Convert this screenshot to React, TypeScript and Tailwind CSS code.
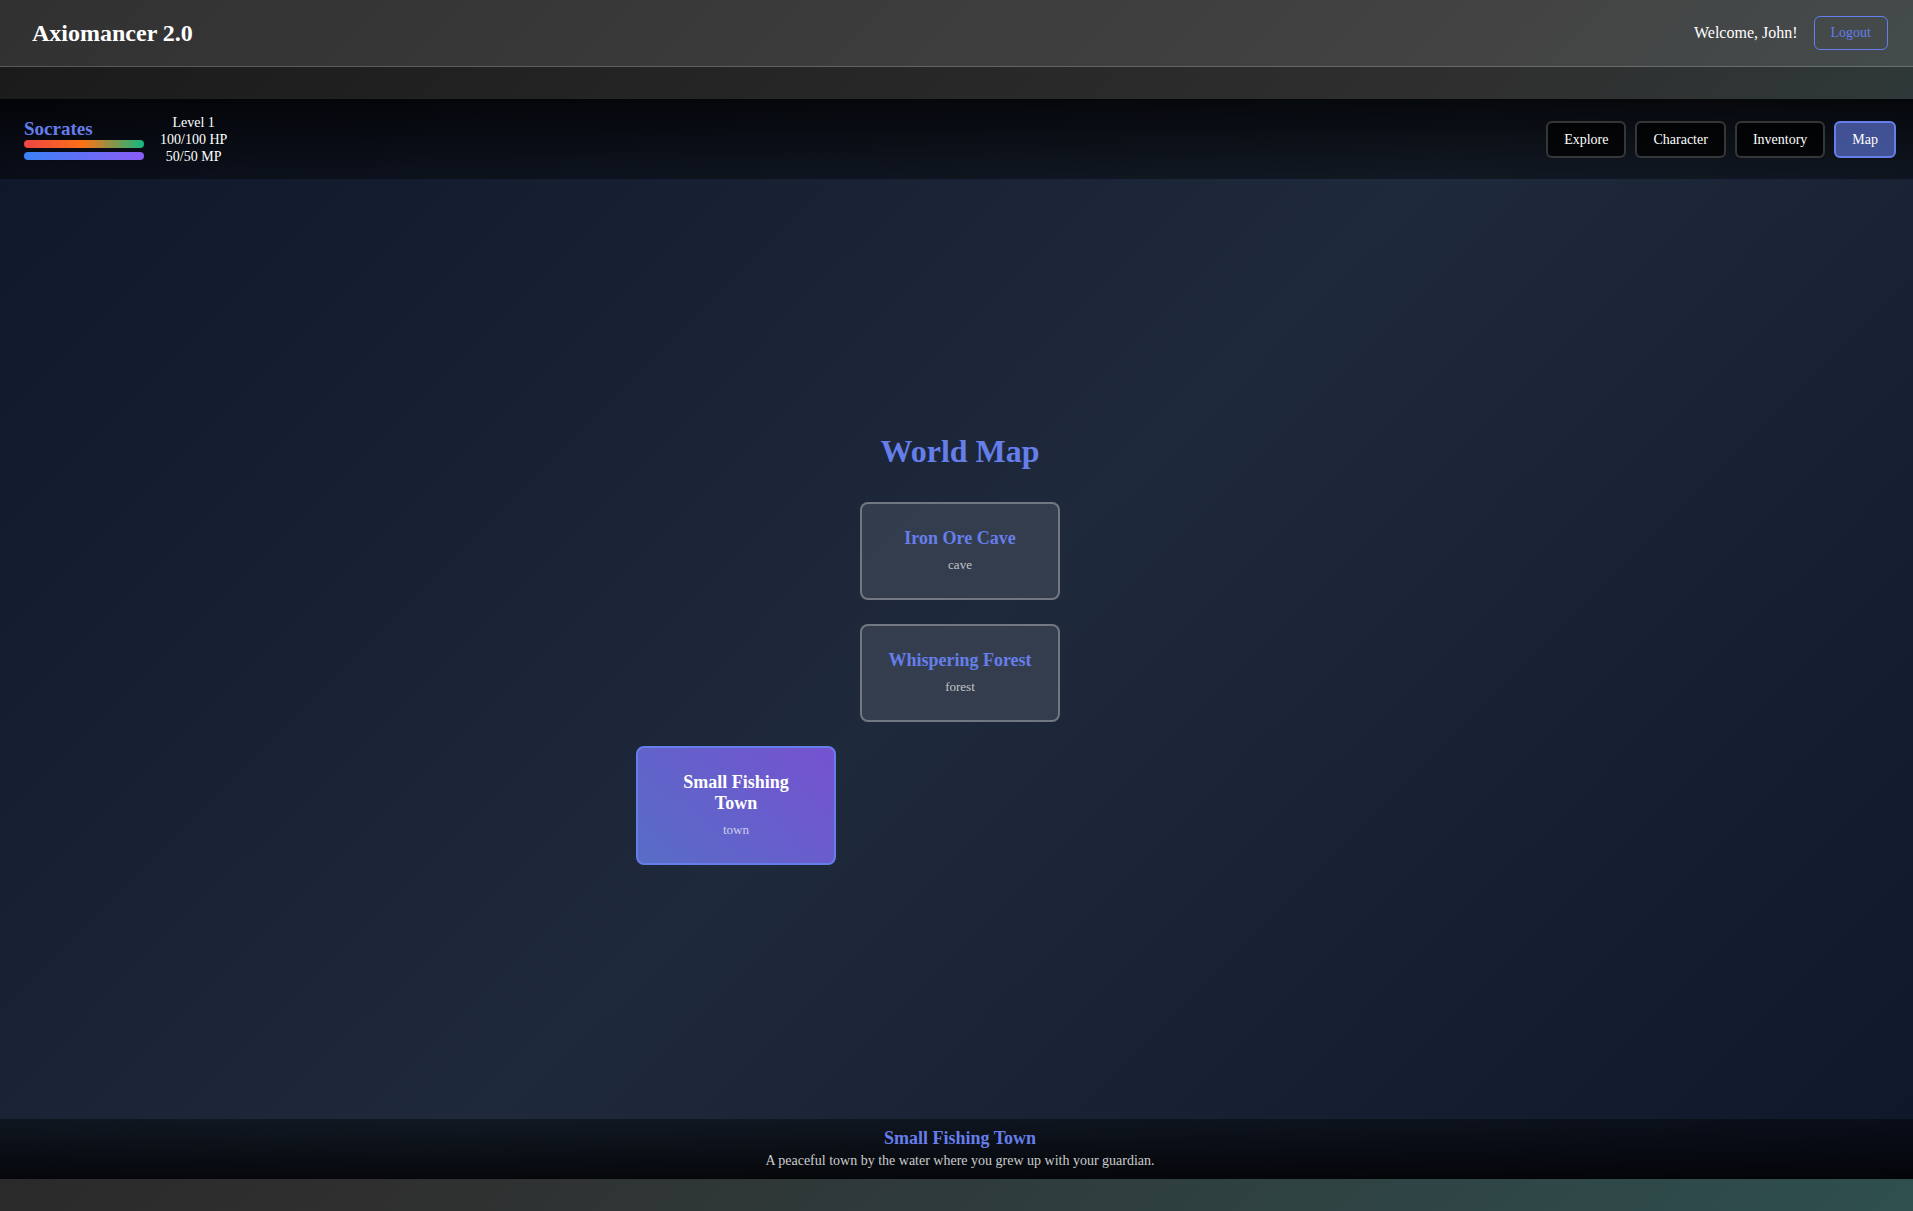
const navItems = ["Explore", "Character", "Inventory", "Map"];

type Place = { name: string; kind: string; current?: boolean; cell: string };

const places: Place[] = [
  { name: "Iron Ore Cave", kind: "cave", cell: "col-start-2 row-start-1" },
  { name: "Whispering Forest", kind: "forest", cell: "col-start-2 row-start-2" },
  { name: "Small Fishing Town", kind: "town", current: true, cell: "col-start-1 row-start-3" },
];

function Header() {
  return (
    <header className="flex items-center justify-between border-b border-white/20 bg-white/10 px-8 py-4">
      <h1 className="text-2xl font-bold">Axiomancer 2.0</h1>
      <div className="flex items-center gap-4">
        <span>Welcome, John!</span>
        <button className="rounded-md border border-[#667eea] px-4 py-2 text-sm leading-4 text-[#667eea]">
          Logout
        </button>
      </div>
    </header>
  );
}

function StatusBar() {
  return (
    <div className="flex h-20 items-center justify-between bg-linear-to-b/srgb from-black/80 to-black/40 px-6">
      <div className="flex items-center gap-4">
        <div className="flex w-[120px] flex-col">
          <h2 className="text-[19px] leading-[22px] font-bold text-[#667eea]">Socrates</h2>
          <div className="h-2 rounded bg-linear-to-r/srgb from-[#ef4444] via-[#f97316] to-[#10b981]" />
          <div className="mt-1 h-2 rounded bg-linear-to-r/srgb from-[#3b82f6] to-[#8b5cf6]" />
        </div>
        <div className="text-center text-sm leading-[17px]">
          <p>Level 1</p>
          <p>100/100 HP</p>
          <p>50/50 MP</p>
        </div>
      </div>
      <nav className="flex gap-[9px]">
        {navItems.map((item) => (
          <button
            key={item}
            className={
              item === "Map"
                ? "rounded-md border-2 border-[#667eea] bg-[#667eea]/60 px-4 py-2 text-sm leading-[17px]"
                : "rounded-md border-2 border-white/20 bg-black/70 px-4 py-2 text-sm leading-[17px]"
            }
          >
            {item}
          </button>
        ))}
      </nav>
    </div>
  );
}

function PlaceCard({ place }: { place: Place }) {
  const look = place.current
    ? "border-[#667eea] bg-linear-45/srgb from-[#667eea]/80 to-[#8b5cf6]/80 text-white"
    : "border-white/30 bg-white/10 text-[#667eea]";
  return (
    <button className={`rounded-lg border-2 px-6 pt-6 pb-[26px] text-center ${look} ${place.cell}`}>
      <h3 className="text-[18px] leading-[21px] font-bold">{place.name}</h3>
      <p className="mt-2 text-[13px] leading-[15px] text-white/70">{place.kind}</p>
    </button>
  );
}

export default function App() {
  return (
    <div className="overflow-hidden font-['Liberation_Serif',serif] text-white">
      <div className="-mr-[7px] flex min-h-screen flex-col bg-linear-135/srgb from-[#1a1a1a] via-[#2f2f2f] to-[#2f4f4f]">
        <Header />
        <main className="flex grow flex-col py-8">
          <div className="flex grow flex-col bg-linear-135/srgb from-[#0f172a] via-[#1e293b] to-[#0f172a]">
            <StatusBar />
            <section className="flex grow flex-col items-center justify-center gap-8">
              <h2 className="text-[32px] leading-[37px] font-bold text-[#667eea]">World Map</h2>
              <div className="grid grid-cols-[repeat(3,200px)] gap-6">
                {places.map((place) => (
                  <PlaceCard key={place.name} place={place} />
                ))}
              </div>
            </section>
            <footer className="flex h-[60px] flex-col items-center justify-center gap-1 bg-linear-to-t/srgb from-black/80 to-black/40 pb-px">
              <h3 className="text-[18px] leading-5 font-bold text-[#667eea]">Small Fishing Town</h3>
              <p className="text-sm leading-[17px] text-[#cccccc]">
                A peaceful town by the water where you grew up with your guardian.
              </p>
            </footer>
          </div>
        </main>
      </div>
    </div>
  );
}
